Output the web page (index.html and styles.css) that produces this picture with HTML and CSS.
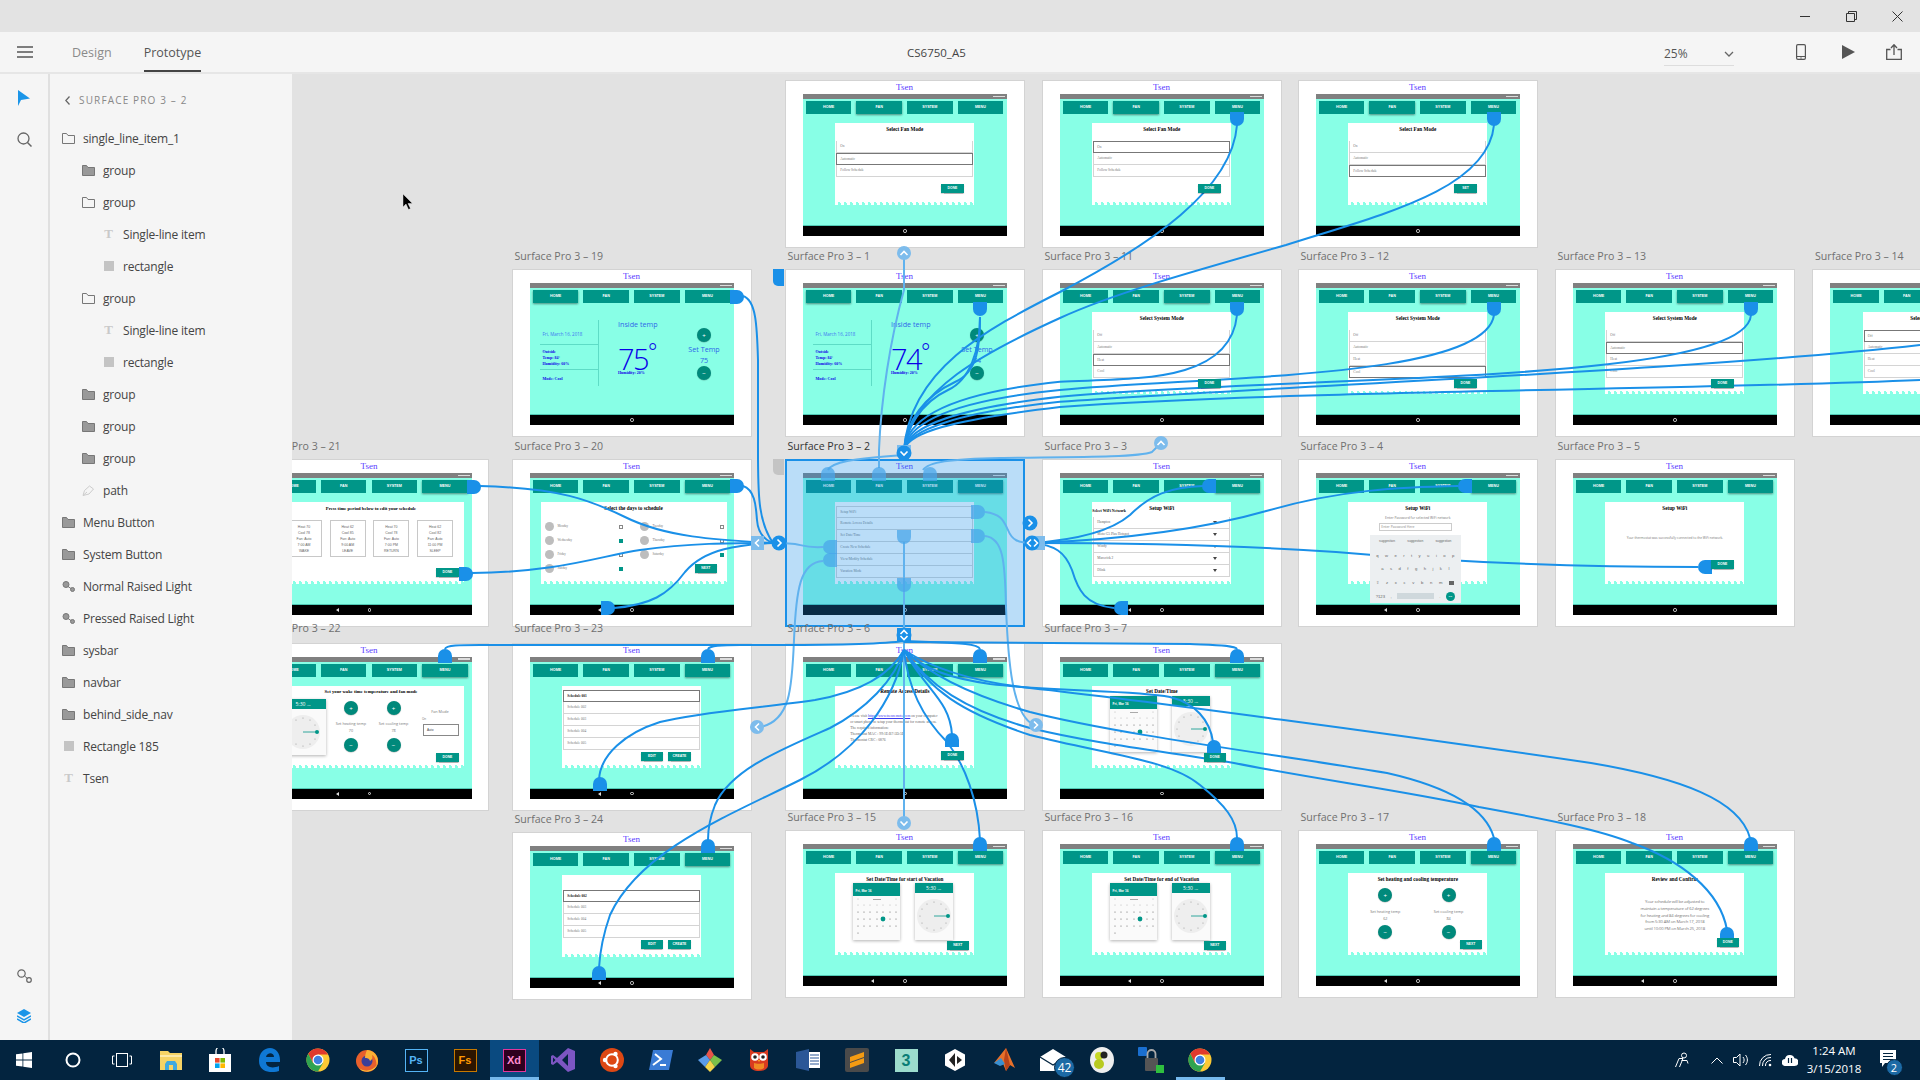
FILE: index.html
```html
<!DOCTYPE html>
<html lang="en">
<head>
<meta charset="utf-8">
<title>CS6750_A5 - Adobe XD</title>
<link rel="stylesheet" href="styles.css">
</head>
<body>
<svg class="defs" aria-hidden="true">
  <defs>
    <symbol id="fo" viewBox="0 0 13 11"><path d="M.5 10.5V.5h4l1.5 2h6.5v8z" fill="none" stroke="#777"/></symbol>
    <symbol id="ff" viewBox="0 0 13 11"><path d="M.5 10.5V.5h4l1.5 2h6.5v8z" fill="#999" stroke="#777"/></symbol>
    <symbol id="cp" viewBox="0 0 13 11"><circle cx="4" cy="3.5" r="3" fill="#999" stroke="#777"/><circle cx="10.5" cy="8.5" r="2" fill="#999" stroke="#777"/><path d="M6 5.5l3 2" stroke="#777"/></symbol>
    <symbol id="pen" viewBox="0 0 13 11"><path d="M1 10.5l1.5-5 5-4.5 4 3-4.5 5z" fill="none" stroke="#ccc"/><path d="M1 10.5l4-3.5" stroke="#ccc"/></symbol>
    <symbol id="bt" viewBox="0 0 14 14"><path d="M0 14V7a7 7 0 0 1 14 0v7z"/></symbol>
    <symbol id="bb" viewBox="0 0 14 14"><path d="M0 0v7a7 7 0 0 0 14 0V0z"/></symbol>
    <symbol id="bl" viewBox="0 0 14 14"><path d="M14 0H7a7 7 0 0 0 0 14h7z"/></symbol>
    <symbol id="br" viewBox="0 0 14 14"><path d="M0 0h7a7 7 0 0 1 0 14H0z"/></symbol>
    <symbol id="clock" viewBox="0 0 38 38">
      <circle cx="19" cy="19" r="17" fill="#eee"/>
      <g fill="#999"><circle cx="19" cy="5" r=".6"/><circle cx="26" cy="7" r=".6"/><circle cx="31" cy="12" r=".6"/><circle cx="26" cy="31" r=".6"/><circle cx="31" cy="26" r=".6"/><circle cx="19" cy="33" r=".6"/><circle cx="12" cy="31" r=".6"/><circle cx="7" cy="26" r=".6"/><circle cx="5" cy="19" r=".6"/><circle cx="7" cy="12" r=".6"/><circle cx="12" cy="7" r=".6"/></g>
      <path d="M19 19h13" stroke="#009688" stroke-width=".8"/><circle cx="33" cy="19" r="2" fill="#009688"/>
    </symbol>
    <symbol id="cal" viewBox="0 0 48 44">
      <g fill="#aaa"><path d="M20 3h8v1h-8z"/><circle cx="5" cy="3" r=".5"/><circle cx="43" cy="3" r=".5"/><circle cx="5" cy="9" r=".5"/><circle cx="11" cy="9" r=".5"/><circle cx="17" cy="9" r=".5"/><circle cx="24" cy="9" r=".5"/><circle cx="30" cy="9" r=".5"/><circle cx="37" cy="9" r=".5"/><circle cx="43" cy="9" r=".5"/></g>
      <g fill="#666"><circle cx="5" cy="16" r=".6"/><circle cx="11" cy="16" r=".6"/><circle cx="17" cy="16" r=".6"/><circle cx="24" cy="16" r=".6"/><circle cx="30" cy="16" r=".6"/><circle cx="37" cy="16" r=".6"/><circle cx="43" cy="16" r=".6"/><circle cx="5" cy="23" r=".6"/><circle cx="11" cy="23" r=".6"/><circle cx="17" cy="23" r=".6"/><circle cx="24" cy="23" r=".6"/><circle cx="37" cy="23" r=".6"/><circle cx="43" cy="23" r=".6"/><circle cx="5" cy="30" r=".6"/><circle cx="11" cy="30" r=".6"/><circle cx="17" cy="30" r=".6"/><circle cx="24" cy="30" r=".6"/><circle cx="30" cy="30" r=".6"/><circle cx="37" cy="30" r=".6"/><circle cx="43" cy="30" r=".6"/><circle cx="5" cy="37" r=".6"/></g>
      <circle cx="30" cy="23" r="2.4" fill="#009688"/>
    </symbol>
    <symbol id="chrome" viewBox="0 0 24 24"><circle cx="12" cy="12" r="11.5" fill="#fcc934"/><path d="M12 .5A11.500 11.500 0 0 1 22 6.500L12 6.500 7 15 2.300 5.800A11.500 11.500 0 0 1 12 .5z" fill="#e0392d"/><path d="M2.300 5.800A11.500 11.500 0 0 0 12 23.500L17 15 7 15z" fill="#2fa350"/><circle cx="12" cy="12" r="5.500" fill="#fff"/><circle cx="12" cy="12" r="4.300" fill="#3f7fe0"/></symbol>
  </defs>
</svg>

<header class="titlebar">
  <span class="win"><svg width="11" height="11" viewBox="0 0 11 11"><path d="M0 5.500h10" stroke="#333"/></svg></span>
  <span class="win"><svg width="11" height="11" viewBox="0 0 11 11"><path d="M.5 2.500h8v8h-8zM2.500 2.500v-2h8v8h-2" fill="none" stroke="#333"/></svg></span>
  <span class="win"><svg width="11" height="11" viewBox="0 0 11 11"><path d="M.5.500l10 10M10.500.500l-10 10" stroke="#333"/></svg></span>
</header>

<div class="toolbar">
  <div class="tleft">
    <svg class="burger" width="16" height="12" viewBox="0 0 16 12"><path d="M0 1h16M0 6h16M0 11h16" stroke="#555" stroke-width="1.500"/></svg>
    <span class="tab">Design</span>
    <span class="tab act-tab">Prototype</span>
  </div>
  <span class="doc">CS6750_A5</span>
  <div class="tright">
    <span class="zoom"><span>25%</span><svg width="10" height="6" viewBox="0 0 10 6"><path d="M1 1l4 4 4-4" fill="none" stroke="#666" stroke-width="1.300"/></svg></span>
    <svg class="ti dev" width="10" height="16" viewBox="0 0 10 16"><rect x=".6" y=".6" width="8.800" height="14.800" rx="1.300" fill="none" stroke="#555" stroke-width="1.200"/><path d="M1 12.500h8" stroke="#555"/><circle cx="5" cy="14" r=".7" fill="#555"/></svg>
    <svg class="ti play" width="13" height="14" viewBox="0 0 13 14"><path d="M0 0l13 7-13 7z" fill="#555"/></svg>
    <svg class="ti share" width="16" height="16" viewBox="0 0 16 16"><path d="M4.500 5.500H.7v9.800h14.600V5.500h-3.800" fill="none" stroke="#555" stroke-width="1.300"/><path d="M8 11V1M5 4l3-3.300L11 4" fill="none" stroke="#555" stroke-width="1.300"/></svg>
  </div>
</div>

<main class="main">
  <aside class="rail">
    <div class="railgrp">
      <svg width="12" height="16" viewBox="0 0 12 16"><path d="M0 0l12 8.500-9 1.500-3 6z" fill="#1b95e8"/></svg>
      <svg width="15" height="15" viewBox="0 0 15 15"><circle cx="6.500" cy="6.500" r="5.500" fill="none" stroke="#666" stroke-width="1.300"/><path d="M10.500 10.500l4 4" stroke="#666" stroke-width="1.500"/></svg>
    </div>
    <div class="railgrp">
      <svg width="15" height="14" viewBox="0 0 15 14"><circle cx="4.500" cy="4.500" r="3.700" fill="none" stroke="#666" stroke-width="1.200"/><circle cx="12" cy="11" r="2.300" fill="none" stroke="#666" stroke-width="1.200"/><path d="M7.500 7l3 2.500" stroke="#666"/></svg>
      <svg width="14" height="14" viewBox="0 0 14 14"><path d="M7 0l7 4-7 4-7-4z" fill="#1b95e8"/><path d="M0 7l7 4 7-4M0 10l7 4 7-4" fill="none" stroke="#1b95e8" stroke-width="1.500"/></svg>
    </div>
  </aside>
  <aside class="panel">
    <div class="phead"><svg width="5" height="9" viewBox="0 0 5 9"><path d="M4.500.5L.8 4.500l3.700 4" fill="none" stroke="#666" stroke-width="1.300"/></svg><span>SURFACE PRO 3 – 2</span></div>
    <div class="row"><svg class="ic"><use href="#fo"/></svg><span>single_line_item_1</span></div>
    <div class="row l1"><svg class="ic"><use href="#ff"/></svg><span>group</span></div>
    <div class="row l1"><svg class="ic"><use href="#fo"/></svg><span>group</span></div>
    <div class="row l2"><span class="tg">T</span><span>Single-line item</span></div>
    <div class="row l2"><span class="rg"></span><span>rectangle</span></div>
    <div class="row l1"><svg class="ic"><use href="#fo"/></svg><span>group</span></div>
    <div class="row l2"><span class="tg">T</span><span>Single-line item</span></div>
    <div class="row l2"><span class="rg"></span><span>rectangle</span></div>
    <div class="row l1"><svg class="ic"><use href="#ff"/></svg><span>group</span></div>
    <div class="row l1"><svg class="ic"><use href="#ff"/></svg><span>group</span></div>
    <div class="row l1"><svg class="ic"><use href="#ff"/></svg><span>group</span></div>
    <div class="row l1"><svg class="ic"><use href="#pen"/></svg><span>path</span></div>
    <div class="row"><svg class="ic"><use href="#ff"/></svg><span>Menu Button</span></div>
    <div class="row"><svg class="ic"><use href="#ff"/></svg><span>System Button</span></div>
    <div class="row"><svg class="ic"><use href="#cp"/></svg><span>Normal Raised Light</span></div>
    <div class="row"><svg class="ic"><use href="#cp"/></svg><span>Pressed Raised Light</span></div>
    <div class="row"><svg class="ic"><use href="#ff"/></svg><span>sysbar</span></div>
    <div class="row"><svg class="ic"><use href="#ff"/></svg><span>navbar</span></div>
    <div class="row"><svg class="ic"><use href="#ff"/></svg><span>behind_side_nav</span></div>
    <div class="row"><span class="rg"></span><span>Rectangle 185</span></div>
    <div class="row"><span class="tg">T</span><span>Tsen</span></div>
  </aside>

  <section class="canvas">

    <!-- column 0 -->
    <article class="ab c0 r2"><span class="lb">Surface Pro 3 – 21</span><div class="ts">Tsen</div><div class="sc"><div class="st"></div><div class="bd"><div class="nv"><b>HOME</b><b>FAN</b><b>SYSTEM</b><b class="on">MENU</b></div>
      <div class="card w"><div class="ct t8">Press time period below to edit your schedule</div>
        <div class="periods">
          <div class="per">Heat 70<br>Cool 78<br>Fan: Auto<br>7:00 AM<br>WAKE</div>
          <div class="per">Heat 62<br>Cool 85<br>Fan: Auto<br>9:00 AM<br>LEAVE</div>
          <div class="per">Heat 70<br>Cool 78<br>Fan: Auto<br>7:00 PM<br>RETURN</div>
          <div class="per">Heat 62<br>Cool 82<br>Fan: Auto<br>11:00 PM<br>SLEEP</div>
        </div>
        <div class="act pr5 m11"><span class="b">DONE</span></div>
      </div></div><div class="nb"><i class="bk"></i><i class="hm"></i></div></div></article>

    <article class="ab c0 r3"><span class="lb">Surface Pro 3 – 22</span><div class="ts">Tsen</div><div class="sc"><div class="st"></div><div class="bd"><div class="nv"><b>HOME</b><b>FAN</b><b>SYSTEM</b><b class="on">MENU</b></div>
      <div class="card w"><div class="ct t15">Set your wake time temperature and fan mode</div>
        <div class="wake">
          <div class="tw ws"><div class="twh">5:30 <small>AM</small></div><svg class="face"><use href="#clock"/></svg></div>
          <div class="tc n"><div class="cb">+</div><div class="tl">Set heating temp</div><div class="tl">70</div><div class="cb mm">−</div></div>
          <div class="tc n"><div class="cb">+</div><div class="tl">Set cooling temp</div><div class="tl">78</div><div class="cb mm">−</div></div>
          <div class="fan"><div class="fm">Fan Mode</div><div class="fo">On</div><div class="fb">Auto</div></div>
        </div>
        <div class="act pr5"><span class="b">DONE</span></div>
      </div></div><div class="nb"><i class="bk"></i><i class="hm"></i></div></div></article>

    <!-- column 1 -->
    <article class="ab c1 r1"><span class="lb">Surface Pro 3 – 19</span><div class="ts">Tsen</div><div class="sc"><div class="st"></div><div class="bd"><div class="nv"><b class="on">HOME</b><b>FAN</b><b>SYSTEM</b><b>MENU</b></div>
      <div class="home">
        <div class="hl"><div class="hd">Fri, March 16, 2018</div><div class="ho">Outside<br>Temp: 84°<br>Humidity: 60%</div><div class="hx">Mode: Cool</div></div>
        <div class="hc"><div class="it">Inside temp</div><div class="tm">75<span class="dg">°</span></div><div class="hh">Humidity: 20%</div></div>
        <div class="hr"><div class="cb">+</div><div class="sl">Set Temp</div><div class="sv">75</div><div class="cb">−</div></div>
      </div></div><div class="nb"><i class="hm"></i></div></div></article>

    <article class="ab c1 r2"><span class="lb">Surface Pro 3 – 20</span><div class="ts">Tsen</div><div class="sc"><div class="st"></div><div class="bd"><div class="nv"><b>HOME</b><b>FAN</b><b>SYSTEM</b><b class="on">MENU</b></div>
      <div class="card w"><div class="ct t17">Select the days to schedule</div>
        <div class="days">
          <div class="dy"><i class="rd"></i><span>Monday</span><i class="ck"></i></div><div class="dy"><i class="rd"></i><span>Tuesday</span><i class="ck"></i></div>
          <div class="dy"><i class="rd"></i><span>Wednesday</span><i class="ck yes"></i></div><div class="dy"><i class="rd"></i><span>Thursday</span><i class="ck"></i></div>
          <div class="dy"><i class="rd"></i><span>Friday</span><i class="ck"></i></div><div class="dy"><i class="rd"></i><span>Saturday</span><i class="ck yes"></i></div>
          <div class="dy"><i class="rd"></i><span>Sunday</span><i class="ck yes"></i></div><div class="dy nx"><span class="b">NEXT</span></div>
        </div>
      </div></div><div class="nb"><i class="bk"></i><i class="hm"></i></div></div></article>

    <article class="ab c1 r3"><span class="lb">Surface Pro 3 – 23</span><div class="ts">Tsen</div><div class="sc"><div class="st"></div><div class="bd"><div class="nv"><b>HOME</b><b>FAN</b><b>SYSTEM</b><b class="on">MENU</b></div>
      <div class="card pt4"><div class="li sel strong">Schedule 001</div><div class="li">Schedule 002</div><div class="li">Schedule 003</div><div class="li">Schedule 004</div><div class="li">Schedule 005</div>
        <div class="act m2"><span class="b">EDIT</span><span class="b">CREATE</span></div>
      </div></div><div class="nb"><i class="bk"></i><i class="hm"></i></div></div></article>

    <article class="ab c1 r4b"><span class="lb">Surface Pro 3 – 24</span><div class="ts">Tsen</div><div class="sc"><div class="st"></div><div class="bd"><div class="nv"><b>HOME</b><b>FAN</b><b>SYSTEM</b><b class="on">MENU</b></div>
      <div class="card pt15"><div class="li sel strong">Schedule 002</div><div class="li">Schedule 003</div><div class="li">Schedule 004</div><div class="li">Schedule 005</div>
        <div class="act m2"><span class="b">EDIT</span><span class="b">CREATE</span></div>
      </div></div><div class="nb"><i class="bk"></i><i class="hm"></i></div></div></article>

    <!-- column 2 -->
    <article class="ab c2 r0"><div class="ts">Tsen</div><div class="sc"><div class="st"></div><div class="bd"><div class="nv"><b>HOME</b><b class="on">FAN</b><b>SYSTEM</b><b>MENU</b></div>
      <div class="card"><div class="ct t17">Select Fan Mode</div><div class="li">On</div><div class="li sel">Automatic</div><div class="li">Follow Schedule</div>
        <div class="act m7"><span class="b">DONE</span></div></div></div><div class="nb"><i class="hm"></i></div></div></article>

    <article class="ab c2 r1"><span class="lb">Surface Pro 3 – 1</span><div class="ts">Tsen</div><div class="sc"><div class="st"></div><div class="bd"><div class="nv"><b class="on">HOME</b><b>FAN</b><b>SYSTEM</b><b>MENU</b></div>
      <div class="home">
        <div class="hl"><div class="hd">Fri, March 16, 2018</div><div class="ho">Outside<br>Temp: 84°<br>Humidity: 60%</div><div class="hx">Mode: Cool</div></div>
        <div class="hc"><div class="it">Inside temp</div><div class="tm">74<span class="dg">°</span></div><div class="hh">Humidity: 20%</div></div>
        <div class="hr"><div class="cb">+</div><div class="sl">Set Temp</div><div class="sv">74</div><div class="cb">−</div></div>
      </div></div><div class="nb"><i class="hm"></i></div></div></article>

    <article class="ab c2 r2 selected"><span class="lb dark">Surface Pro 3 – 2</span><div class="ts">Tsen</div><div class="sc"><div class="st"></div><div class="bd"><div class="nv"><b>HOME</b><b>FAN</b><b>SYSTEM</b><b class="on">MENU</b></div>
      <div class="card pt4"><div class="li">Setup WiFi</div><div class="li">Remote Access Details</div><div class="li">Set Date/Time</div><div class="li">Create New Schedule</div><div class="li">View/Modify Schedule</div><div class="li">Vacation Mode</div></div></div><div class="nb"><i class="hm"></i></div></div></article>

    <article class="ab c2 r3"><span class="lb">Surface Pro 3 – 6</span><div class="ts">Tsen</div><div class="sc"><div class="st"></div><div class="bd"><div class="nv"><b>HOME</b><b>FAN</b><b>SYSTEM</b><b class="on">MENU</b></div>
      <div class="card"><div class="ct t25">Remote Access Details</div>
        <div class="para">Please visit <a class="lk">https://www.tsenremote.com</a> on your computer<br>or smart phone to setup your thermostat for remote access.<br>The required information:<br>Thermostat MAC : 99:1E:B7:5D:5B<br>Thermostat CRC : 0876</div>
        <div class="act m7"><span class="b">DONE</span></div></div></div><div class="nb"><i class="hm"></i></div></div></article>

    <article class="ab c2 r4"><span class="lb">Surface Pro 3 – 15</span><div class="ts">Tsen</div><div class="sc"><div class="st"></div><div class="bd"><div class="nv"><b>HOME</b><b>FAN</b><b>SYSTEM</b><b class="on">MENU</b></div>
      <div class="card"><div class="ct t10">Set Date/Time for start of Vacation</div>
        <div class="dt"><div class="dw"><div class="dwh">Fri, Mar 16</div><svg class="calg"><use href="#cal"/></svg></div><div class="tw"><div class="twh">5:30 <small>AM</small></div><svg class="face"><use href="#clock"/></svg></div></div>
        <div class="act pr5 m1"><span class="b">NEXT</span></div></div></div><div class="nb"><i class="bk"></i><i class="hm"></i></div></div></article>

    <!-- column 3 -->
    <article class="ab c3 r0"><div class="ts">Tsen</div><div class="sc"><div class="st"></div><div class="bd"><div class="nv"><b>HOME</b><b class="on">FAN</b><b>SYSTEM</b><b>MENU</b></div>
      <div class="card"><div class="ct t17">Select Fan Mode</div><div class="li sel">On</div><div class="li">Automatic</div><div class="li">Follow Schedule</div>
        <div class="act m7"><span class="b">DONE</span></div></div></div><div class="nb"><i class="hm"></i></div></div></article>

    <article class="ab c3 r1"><span class="lb">Surface Pro 3 – 11</span><div class="ts">Tsen</div><div class="sc"><div class="st"></div><div class="bd"><div class="nv"><b>HOME</b><b>FAN</b><b class="on">SYSTEM</b><b>MENU</b></div>
      <div class="card"><div class="ct t17">Select System Mode</div><div class="li">Off</div><div class="li">Automatic</div><div class="li sel">Heat</div><div class="li">Cool</div>
        <div class="act m1"><span class="b">DONE</span></div></div></div><div class="nb"><i class="hm"></i></div></div></article>

    <article class="ab c3 r2"><span class="lb">Surface Pro 3 – 3</span><div class="ts">Tsen</div><div class="sc"><div class="st"></div><div class="bd"><div class="nv"><b>HOME</b><b>FAN</b><b>SYSTEM</b><b class="on">MENU</b></div>
      <div class="card"><div class="ct t15 wifi-t">Setup WiFi<span class="swn">Select WiFi Network</span></div>
        <div class="li sg">Hampton<i class="wf"></i></div><div class="li sg">Moto G5 Plus Hotspot<i class="wf"></i></div><div class="li sg">Windy<i class="wf"></i></div><div class="li sg">Maverick 2<i class="wf"></i></div><div class="li sg">Dlink<i class="wf"></i></div></div></div><div class="nb"><i class="bk"></i><i class="hm"></i></div></div></article>

    <article class="ab c3 r3"><span class="lb">Surface Pro 3 – 7</span><div class="ts">Tsen</div><div class="sc"><div class="st"></div><div class="bd"><div class="nv"><b>HOME</b><b>FAN</b><b>SYSTEM</b><b class="on">MENU</b></div>
      <div class="card"><div class="ct t10">Set Date/Time</div>
        <div class="dt"><div class="dw"><div class="dwh">Fri, Mar 16</div><svg class="calg"><use href="#cal"/></svg></div><div class="tw"><div class="twh">5:30 <small>AM</small></div><svg class="face"><use href="#clock"/></svg></div></div>
        <div class="act pr5 m1"><span class="b">DONE</span></div></div></div><div class="nb"><i class="hm"></i></div></div></article>

    <article class="ab c3 r4"><span class="lb">Surface Pro 3 – 16</span><div class="ts">Tsen</div><div class="sc"><div class="st"></div><div class="bd"><div class="nv"><b>HOME</b><b>FAN</b><b>SYSTEM</b><b class="on">MENU</b></div>
      <div class="card"><div class="ct t10">Set Date/Time for end of Vacation</div>
        <div class="dt"><div class="dw"><div class="dwh">Fri, Mar 16</div><svg class="calg"><use href="#cal"/></svg></div><div class="tw"><div class="twh">5:30 <small>AM</small></div><svg class="face"><use href="#clock"/></svg></div></div>
        <div class="act pr5 m1"><span class="b">NEXT</span></div></div></div><div class="nb"><i class="bk"></i><i class="hm"></i></div></div></article>

    <!-- column 4 -->
    <article class="ab c4 r0"><div class="ts">Tsen</div><div class="sc"><div class="st"></div><div class="bd"><div class="nv"><b>HOME</b><b class="on">FAN</b><b>SYSTEM</b><b>MENU</b></div>
      <div class="card"><div class="ct t17">Select Fan Mode</div><div class="li">On</div><div class="li">Automatic</div><div class="li sel">Follow Schedule</div>
        <div class="act m7"><span class="b">SET</span></div></div></div><div class="nb"><i class="hm"></i></div></div></article>

    <article class="ab c4 r1"><span class="lb">Surface Pro 3 – 12</span><div class="ts">Tsen</div><div class="sc"><div class="st"></div><div class="bd"><div class="nv"><b>HOME</b><b>FAN</b><b class="on">SYSTEM</b><b>MENU</b></div>
      <div class="card"><div class="ct t17">Select System Mode</div><div class="li">Off</div><div class="li">Automatic</div><div class="li">Heat</div><div class="li sel">Cool</div>
        <div class="act m1"><span class="b">DONE</span></div></div></div><div class="nb"><i class="hm"></i></div></div></article>

    <article class="ab c4 r2"><span class="lb">Surface Pro 3 – 4</span><div class="ts">Tsen</div><div class="sc"><div class="st"></div><div class="bd"><div class="nv"><b>HOME</b><b>FAN</b><b>SYSTEM</b><b class="on">MENU</b></div>
      <div class="card"><div class="ct t12">Setup WiFi</div><div class="pw">Enter Password for selected WiFi network</div><div class="pi">Enter Password Here</div>
        <div class="kb">
          <div class="kr sg-r"><span>suggestion</span><span>suggestion</span><span>suggestion</span></div>
          <div class="kr"><span>q</span><span>w</span><span>e</span><span>r</span><span>t</span><span>y</span><span>u</span><span>i</span><span>o</span><span>p</span></div>
          <div class="kr pad"><span>a</span><span>s</span><span>d</span><span>f</span><span>g</span><span>h</span><span>j</span><span>k</span><span>l</span></div>
          <div class="kr"><span>⇧</span><span>z</span><span>x</span><span>c</span><span>v</span><span>b</span><span>n</span><span>m</span><span class="bs"></span></div>
          <div class="kr"><span>?123</span><span>,</span><span class="sp"></span><span>.</span><span class="go">GO</span></div>
        </div></div></div><div class="nb"><i class="bk"></i><i class="hm"></i></div></div></article>

    <article class="ab c4 r4"><span class="lb">Surface Pro 3 – 17</span><div class="ts">Tsen</div><div class="sc"><div class="st"></div><div class="bd"><div class="nv"><b>HOME</b><b>FAN</b><b>SYSTEM</b><b class="on">MENU</b></div>
      <div class="card"><div class="ct t15">Set heating and cooling temperature</div>
        <div class="temps"><div class="tc"><div class="cb">+</div><div class="tl">Set heating temp</div><div class="tl">62</div><div class="cb mm">−</div></div><div class="tc"><div class="cb">+</div><div class="tl">Set cooling temp</div><div class="tl">84</div><div class="cb mm">−</div></div></div>
        <div class="act pr5"><span class="b">NEXT</span></div></div></div><div class="nb"><i class="bk"></i><i class="hm"></i></div></div></article>

    <!-- column 5 -->
    <article class="ab c5 r1"><span class="lb">Surface Pro 3 – 13</span><div class="ts">Tsen</div><div class="sc"><div class="st"></div><div class="bd"><div class="nv"><b>HOME</b><b>FAN</b><b class="on">SYSTEM</b><b>MENU</b></div>
      <div class="card"><div class="ct t17">Select System Mode</div><div class="li">Off</div><div class="li sel">Automatic</div><div class="li">Heat</div><div class="li">Cool</div>
        <div class="act m1"><span class="b">DONE</span></div></div></div><div class="nb"><i class="hm"></i></div></div></article>

    <article class="ab c5 r2"><span class="lb">Surface Pro 3 – 5</span><div class="ts">Tsen</div><div class="sc"><div class="st"></div><div class="bd"><div class="nv"><b>HOME</b><b>FAN</b><b>SYSTEM</b><b class="on">MENU</b></div>
      <div class="card"><div class="ct t33">Setup WiFi</div><div class="ok">Your thermostat was successfully connected to the WiFi network.</div>
        <div class="act m19"><span class="b">DONE</span></div></div></div><div class="nb"><i class="hm"></i></div></div></article>

    <article class="ab c5 r4"><span class="lb">Surface Pro 3 – 18</span><div class="ts">Tsen</div><div class="sc"><div class="st"></div><div class="bd"><div class="nv"><b>HOME</b><b>FAN</b><b>SYSTEM</b><b class="on">MENU</b></div>
      <div class="card"><div class="ct t25">Review and Confirm</div>
        <div class="rev">Your schedule will be adjusted to<br>maintain a temperature of 62 degrees<br>for heating and 84 degrees for cooling<br>from 5:30 AM on March 17, 2018<br>until 10:00 PM on March 25, 2018</div>
        <div class="act pr5"><span class="b">DONE</span></div></div></div><div class="nb"><i class="bk"></i><i class="hm"></i></div></div></article>

    <!-- column 6 -->
    <article class="ab c6 r1"><span class="lb">Surface Pro 3 – 14</span><div class="ts">Tsen</div><div class="sc"><div class="st"></div><div class="bd"><div class="nv"><b>HOME</b><b>FAN</b><b class="on">SYSTEM</b><b>MENU</b></div>
      <div class="card"><div class="ct t17">Select System Mode</div><div class="li sel">Off</div><div class="li">Automatic</div><div class="li">Heat</div><div class="li">Cool</div>
        <div class="act m1"><span class="b">DONE</span></div></div></div><div class="nb"><i class="hm"></i></div></div></article>

    <!-- prototype wires -->
    <svg class="wires" width="1628" height="966" viewBox="292 74 1628 966">
      <!-- grey and blue tabs behind board edges -->
      <path d="M773 269h11v17h-6a5 5 0 0 1-5-5z" fill="#1a90e8"/>
      <path d="M773 459h11v16h-6a5 5 0 0 1-5-5z" fill="#c4c4c4"/>

      <!-- wires of the selected board, faded -->
      <g class="fade" fill="none">
        <path d="M828 470C832 462 850 459 904 455"/>
        <path d="M879 468L879 450C881 400 890 340 904 290L904 258"/>
        <path d="M923 470C928 462 950 459 1000 458C1060 457 1137 458 1152 452L1161 443"/>
        <path d="M985 512C1002 514 1004 522 1008 530C1012 540 1018 543 1032 543"/>
        <path d="M985 536C1003 538 1005 560 1006 607C1008 660 1012 715 1034 725"/>
        <path d="M823 547C806 548 802 545 795 544L782 543"/>
        <path d="M823 561C800 562 796 590 794 640C792 690 790 720 761 727"/>
        <path d="M904 542L904 820"/>
      </g>
      <g class="fadefill">
        <use href="#bt" x="821" y="467" width="14" height="14"/>
        <use href="#bt" x="872" y="467" width="14" height="14"/>
        <use href="#bt" x="923" y="467" width="14" height="14"/>
        <use href="#br" x="971" y="505" width="14" height="14"/>
        <use href="#br" x="971" y="529" width="14" height="14"/>
        <use href="#bl" x="823" y="540" width="14" height="14"/>
        <use href="#bl" x="823" y="553" width="14" height="14"/>
        <use href="#bb" x="897" y="530" width="14" height="14"/>
        <use href="#bb" x="897" y="578" width="14" height="14"/>
      </g>

      <!-- solid wires -->
      <g class="wire" fill="none">
        <!-- left hub -->
        <path d="M743 296C756 300 757 325 758 360L758 440C758 490 757 520 773 543"/>
        <path d="M743 486C756 490 756 510 757 520C758 533 765 540 773 543"/>
        <path d="M614 608C650 605 668 595 685 572C705 548 740 545 773 543"/>
        <path d="M480 486C560 488 590 500 625 517C665 537 715 540 773 543"/>
        <path d="M472 573C560 572 600 556 640 550C690 543 730 543 773 543"/>
        <!-- right hub -->
        <path d="M1203 486C1170 487 1150 495 1130 515C1110 532 1075 540 1032 543"/>
        <path d="M1458 486C1400 487 1340 490 1270 510C1200 530 1120 540 1032 543"/>
        <path d="M1698 567C1560 567 1450 562 1336 552C1230 545 1130 543 1032 543"/>
        <path d="M1114 608C1085 605 1078 590 1072 570C1065 552 1055 545 1032 543"/>
        <!-- top hub -->
        <path d="M980 317C980 345 978 372 955 382C925 396 906 420 904 450"/>
        <path d="M980 317C980 350 970 380 948 390C920 403 906 430 904 450"/>
        <path d="M1237 125C1232 190 1150 245 1060 292C985 330 910 370 904 450"/>
        <path d="M1494 125C1488 190 1380 215 1286 245C1180 275 1110 295 1060 318C985 352 912 390 904 450"/>
        <path d="M904 450C907 415 960 392 1060 381.700C1130 378 1230 385 1237 315"/>
        <path d="M904 450C908 420 960 400 1060 390C1200 376 1485 380 1494 315"/>
        <path d="M904 450C908 425 960 408 1060 396.700C1300 375 1745 385 1751 315"/>
        <path d="M904 450C908 430 960 412 1060 401.700C1300 385 1700 370 1920 345"/>
        <path d="M904 450C908 433 950 420 1060 407C1300 390 1700 390 1920 380"/>
        <!-- bottom hub -->
        <path d="M445 649C446 645 460 645 480 645L780 645C850 645 890 643 904 641"/>
        <path d="M708 649C710 645 725 645 740 645"/>
        <path d="M980 649C978 644 960 643 930 642L904 641"/>
        <path d="M1237 649C1235 645 1215 645 1190 644L904 642"/>
        <path d="M904 650C890 675 860 692 815 700C760 708 700 712 660 722C625 733 600 755 599 780"/>
        <path d="M904 650C895 680 865 710 830 728C780 750 730 770 715 805C709 820 708 830 708 840"/>
        <path d="M904 650C895 700 860 750 800 780C730 815 640 850 610 915C603 935 600 950 599 968"/>
        <path d="M904 650C925 690 950 700 952 735"/>
        <path d="M904 650C908 690 925 720 947 742C965 765 978 800 980 840"/>
        <path d="M904 650C925 670 950 678 990 684C1060 692 1130 690 1170 697C1195 703 1210 720 1213 742"/>
        <path d="M904 650C930 690 960 712 1030 735C1110 755 1170 760 1200 785C1225 805 1237 820 1237 838"/>
        <path d="M904 650C930 675 970 695 1030 712C1120 735 1280 755 1387 773C1440 785 1485 805 1494 838"/>
        <path d="M904 650C935 670 975 682 1030 688C1140 700 1400 735 1591 763C1680 778 1740 800 1750 838"/>
        <path d="M904 650C928 685 965 710 1030 728C1100 745 1170 752 1234 763C1320 780 1400 790 1479 807C1550 820 1600 830 1632 843C1680 860 1720 890 1727 930"/>
      </g>
      <g class="wirefill">
        <!-- domes pointing up -->
        <use href="#bt" x="438" y="649" width="14" height="14"/>
        <use href="#bt" x="701" y="649" width="14" height="14"/>
        <use href="#bt" x="973" y="649" width="14" height="14"/>
        <use href="#bt" x="1230" y="649" width="14" height="14"/>
        <use href="#bt" x="945" y="733" width="14" height="14"/>
        <use href="#bt" x="1207" y="740" width="14" height="14"/>
        <use href="#bt" x="593" y="777" width="14" height="14"/>
        <use href="#bt" x="592" y="966" width="14" height="14"/>
        <use href="#bt" x="701" y="839" width="14" height="14"/>
        <use href="#bt" x="973" y="837" width="14" height="14"/>
        <use href="#bt" x="1230" y="837" width="14" height="14"/>
        <use href="#bt" x="1487" y="837" width="14" height="14"/>
        <use href="#bt" x="1744" y="837" width="14" height="14"/>
        <use href="#bt" x="1720" y="927" width="14" height="14"/>
        <!-- domes pointing down -->
        <use href="#bb" x="973" y="302" width="14" height="14"/>
        <use href="#bb" x="1230" y="112" width="14" height="14"/>
        <use href="#bb" x="1487" y="112" width="14" height="14"/>
        <use href="#bb" x="1230" y="302" width="14" height="14"/>
        <use href="#bb" x="1487" y="302" width="14" height="14"/>
        <use href="#bb" x="1744" y="302" width="14" height="14"/>
        <!-- domes pointing right -->
        <use href="#br" x="730" y="290" width="14" height="14"/>
        <use href="#br" x="730" y="479" width="14" height="14"/>
        <use href="#br" x="467" y="480" width="14" height="14"/>
        <use href="#br" x="459" y="567" width="14" height="14"/>
        <use href="#br" x="601" y="601" width="14" height="14"/>
        <!-- domes pointing left -->
        <use href="#bl" x="1202" y="479" width="14" height="14"/>
        <use href="#bl" x="1458" y="479" width="14" height="14"/>
        <use href="#bl" x="1698" y="560" width="14" height="14"/>
        <use href="#bl" x="1114" y="601" width="14" height="14"/>
      </g>

      <!-- connection ports -->
      <g>
        <circle class="pl" cx="904" cy="253" r="7"/><path class="cv" d="M900.500 255l3.500-3.500 3.500 3.500"/>
        <rect class="pl" x="897" y="445" width="14" height="8"/>
        <rect class="pl" x="751" y="536" width="13" height="14"/><path class="cv" d="M759 539.500l-3.500 3.500 3.500 3.500"/>
        <circle class="pl" cx="757" cy="727" r="7"/><path class="cv" d="M759 723.500l-3.500 3.500 3.500 3.500"/>
        <circle class="pl" cx="1036" cy="725" r="7"/><path class="cv" d="M1034 721.500l3.500 3.500-3.500 3.500"/>
        <circle class="pl" cx="904" cy="823" r="7"/><path class="cv" d="M900.500 821.500l3.500 3.500 3.500-3.500"/>
        <circle class="pl" cx="1161" cy="443" r="7"/><path class="cv" d="M1157.500 445l3.500-3.500 3.500 3.500"/>
        <rect class="pl" x="1032" y="536" width="13" height="14"/>
        <rect class="pd" x="897" y="628" width="14" height="13"/>
        <circle class="pd" cx="904" cy="453" r="7.500"/><path class="cv" d="M900.500 451.500l3.500 3.500 3.500-3.500"/>
        <circle class="pd" cx="779" cy="543" r="7.500"/><path class="cv" d="M777.500 539.500l3.500 3.500-3.500 3.500"/>
        <circle class="pd" cx="1030" cy="523" r="7.500"/><path class="cv" d="M1028.500 519.500l3.500 3.500-3.500 3.500"/>
        <circle class="pd" cx="1032" cy="543" r="7.500"/><path class="cv" d="M1031 539.500l-3.500 3.500 3.500 3.500M1034 539.500l3.500 3.500-3.500 3.500"/>
        <circle class="pd" cx="904" cy="635" r="7.500"/><path class="cv" d="M900.500 634l3.500-3.500 3.500 3.500M900.500 636l3.500 3.500 3.500-3.500"/>
      </g>
    </svg>

    <svg class="cursor" width="10" height="16" viewBox="0 0 10 16"><path d="M0 0v13l3-3 2.500 5.500 2-1L5 9.500h4.500z" fill="#000" stroke="#fff" stroke-width=".4"/></svg>
  </section>
</main>

<footer class="taskbar">
  <div class="tk"><svg width="16" height="16" viewBox="0 0 16 16"><path d="M0 2.300l6.500-.9V7.600H0zM7.300 1.300L16 0v7.600H7.300zM0 8.400h6.500v6.200L0 13.700zM7.300 8.400H16V16l-8.700-1.300z" fill="#fff"/></svg></div>
  <div class="tk"><svg width="16" height="16" viewBox="0 0 16 16"><circle cx="8" cy="8" r="6.500" fill="none" stroke="#fff" stroke-width="2"/></svg></div>
  <div class="tk"><svg width="20" height="14" viewBox="0 0 20 14"><rect x="4.500" y=".5" width="11" height="13" fill="none" stroke="#fff"/><path d="M2.500 3H.5v8h2M17.500 3h2v8h-2" fill="none" stroke="#fff"/></svg></div>
  <div class="tk"><svg width="22" height="20" viewBox="0 0 22 20"><path d="M0 1h8l2 2h12v17H0z" fill="#f6d365"/><path d="M0 5h22v2H0z" fill="#fde9a7"/><path d="M7 11h8l2 3v6H5v-6z" fill="#3fa9e0"/><rect x="9" y="15" width="4" height="5" fill="#f6d365"/></svg></div>
  <div class="tk"><svg width="22" height="24" viewBox="0 0 22 24"><path d="M7 6V3a4 4 0 0 1 8 0v3" fill="none" stroke="#fff" stroke-width="1.300"/><path d="M0 6h22v18H0z" fill="#fff"/><path d="M6 10h4.600v4.600H6z" fill="#e8492f"/><path d="M11.400 10H16v4.600h-4.600z" fill="#7fba00"/><path d="M6 15.400h4.600V20H6z" fill="#00a4ef"/><path d="M11.400 15.400H16V20h-4.600z" fill="#ffb900"/></svg></div>
  <div class="tk"><svg width="22" height="24" viewBox="0 0 22 24"><path d="M1 13C1 5 6 0 12 0c6 0 10 5 10 12v2H8c0 5 6 7 13 4v5c-10 3-20 0-20-10zM8 9h8c0-5-7-5-8 0z" fill="#0f78d4"/></svg></div>
  <div class="tk"><svg width="24" height="24"><use href="#chrome"/></svg></div>
  <div class="tk"><svg width="24" height="24" viewBox="0 0 24 24"><circle cx="12" cy="13" r="11" fill="#e8602c"/><circle cx="12" cy="13" r="5.500" fill="#3b3f99"/><path d="M12 2c6 0 11 5 11 11 0 2-.5 4-1.500 5.500C22 12 19 8 17 7c1 3 0 5-2 6-1-3-3-3-5-3 0-3 1-6 2-8z" fill="#fbb034"/><path d="M4 20c5 4 13 4 18-3-2 7-14 9-18 3z" fill="#f7d53c"/></svg></div>
  <div class="tk"><span class="app ps">Ps</span></div>
  <div class="tk"><span class="app fs">Fs</span></div>
  <div class="tk on"><span class="app xd">Xd</span></div>
  <div class="tk"><svg width="24" height="24" viewBox="0 0 24 24"><path d="M17 0l7 3v18l-7 3L6 14l-4 3-2-1V8l2-1 4 3zM17 6l-6 6 6 6zM2 9.500v5l2.500-2.500z" fill="#7d56c2"/></svg></div>
  <div class="tk"><svg width="24" height="24" viewBox="0 0 24 24"><circle cx="12" cy="12" r="12" fill="#dd4814"/><circle cx="12" cy="12" r="5.800" fill="none" stroke="#fff" stroke-width="2"/><circle cx="5" cy="12" r="2.200" fill="#fff"/><circle cx="15.500" cy="5.900" r="2.200" fill="#fff"/><circle cx="15.500" cy="18.100" r="2.200" fill="#fff"/></svg></div>
  <div class="tk"><svg width="24" height="20" viewBox="0 0 24 20"><path d="M4 0h20l-4 20H0z" fill="#3a7bd5"/><path d="M6 4l6 5-8 6" fill="none" stroke="#fff" stroke-width="2"/><path d="M11 15h6" stroke="#fff" stroke-width="2"/></svg></div>
  <div class="tk"><svg width="24" height="24" viewBox="0 0 24 24"><path d="M12 0l4 7-4 5-4-5z" fill="#e8544a"/><path d="M16 7l8 5-7 7-5-7z" fill="#7cc04a"/><path d="M8 7l-8 5 7 7 5-7z" fill="#5a9be8"/><path d="M7 19l5-7 5 7-5 5z" fill="#f4d44a"/></svg></div>
  <div class="tk"><svg width="24" height="26" viewBox="0 0 24 26"><path d="M3 2l4 3h10l4-3v16c0 4-4 6-9 6s-9-2-9-6z" fill="#d83b20"/><circle cx="8" cy="10" r="3.800" fill="#fff"/><circle cx="16" cy="10" r="3.800" fill="#fff"/><circle cx="8" cy="10" r="1.800" fill="#222"/><circle cx="16" cy="10" r="1.800" fill="#222"/><path d="M10.500 13l1.500 2 1.500-2z" fill="#f5a623"/><path d="M7 16c2 1 8 1 10 0v5c-3 2-7 2-10 0z" fill="#f08a24"/></svg></div>
  <div class="tk"><svg width="24" height="22" viewBox="0 0 24 22"><path d="M0 3l13-3v22L0 19z" fill="#2b5797"/><path d="M13 3h11v16H13z" fill="#fff"/><path d="M14 6h9M14 9h9M14 12h9M14 15h9" stroke="#2b5797"/></svg></div>
  <div class="tk"><svg width="24" height="24" viewBox="0 0 24 24"><rect width="24" height="24" rx="2" fill="#4a4a4a"/><path d="M5 9l14-5v5L5 14zM5 15l14-5v5L5 20z" fill="#f59b12"/></svg></div>
  <div class="tk"><span class="app mx">3</span></div>
  <div class="tk"><svg width="24" height="24" viewBox="0 0 24 24"><path d="M12 1l10 5.500v11L12 23 2 17.500v-11z" fill="#fff"/><path d="M12 5l-6 7 6 7zM14 8l5 4-5 4z" fill="#222"/></svg></div>
  <div class="tk"><svg width="24" height="24" viewBox="0 0 24 24"><path d="M14 0l9 20-5-3-4 6-4-10-8 2z" fill="#e8702a"/><path d="M2 15l7-5 4 6-5 2z" fill="#3a8fd0"/><path d="M14 0l-2 12 2 11 4-6z" fill="#b8431a"/></svg></div>
  <div class="tk badged"><svg width="26" height="22" viewBox="0 0 26 22"><path d="M0 8L13 0l13 8v14H0z" fill="#fff"/><path d="M0 8l13 8 13-8" fill="none" stroke="#03243f" stroke-width="1.200"/></svg><span class="bdg">42</span></div>
  <div class="tk"><svg width="26" height="26" viewBox="0 0 26 26"><ellipse cx="13" cy="13" rx="12" ry="13" fill="#eee"/><circle cx="10" cy="9" r="4" fill="#c7d826"/><circle cx="15" cy="8" r="3.500" fill="#222"/><circle cx="10" cy="17" r="5" fill="#b8ca20"/></svg></div>
  <div class="tk"><svg width="26" height="26" viewBox="0 0 26 26"><rect y="0" width="9" height="9" rx="1" fill="#1a6fd0"/><rect x="7" y="11" width="13" height="13" rx="1" fill="#555"/><path d="M9.500 11V7a4 4 0 0 1 8 0v4" fill="none" stroke="#aaa" stroke-width="1.800"/><path d="M18 18h8v8h-8z" fill="#2fbf3f"/></svg></div>
  <div class="tk ul"><svg width="24" height="24"><use href="#chrome"/></svg></div>
  <div class="tray">
    <svg width="16" height="16" viewBox="0 0 16 16"><circle cx="10" cy="3.500" r="2.500" fill="none" stroke="#fff"/><path d="M1.500 15L5 6.500h4L5.500 15M7.500 8.500h5.500l1 3" fill="none" stroke="#fff"/></svg>
    <svg class="car" width="12" height="7" viewBox="0 0 12 7"><path d="M.5 6.500L6 1l5.500 5.500" fill="none" stroke="#fff"/></svg>
    <svg width="16" height="14" viewBox="0 0 16 14"><path d="M.5 4.500h3L7 1v12L3.500 9.500h-3zM10 4c1.500 2 1.500 4 0 6M12.500 2c2.500 3 2.500 7 0 10" fill="none" stroke="#fff"/></svg>
    <svg width="15" height="14" viewBox="0 0 15 14"><path d="M1.500 13A11 11 0 0 1 13 1.500M4.500 13A8 8 0 0 1 13 4.500M7.500 13A5 5 0 0 1 13 7.500" fill="none" stroke="#fff"/><circle cx="12" cy="12" r="1.300" fill="#fff"/></svg>
    <svg width="16" height="12" viewBox="0 0 16 12"><path d="M3.500 12a3.500 3.500 0 0 1-.5-7 5 5 0 0 1 9.500-.8A3.800 3.800 0 0 1 12.500 12z" fill="#fff"/><path d="M6.500 4v5M9.500 4v5" stroke="#03243f" stroke-width="1.200"/></svg>
    <div class="clock"><span>1:24 AM</span><span>3/15/2018</span></div>
    <div class="notif"><svg width="16" height="17" viewBox="0 0 16 17"><path d="M0 0h16v13H5l-3 4v-4H0z" fill="#fff"/><path d="M3 3.500h10M3 6.500h10M3 9.500h10" stroke="#03243f"/></svg><span class="bdg sm">2</span></div>
  </div>
</footer>
</body>
</html>
```

FILE: styles.css
```css
* { box-sizing: border-box; }
html, body { margin: 0; padding: 0; }
body {
  width: 1920px; height: 1080px; overflow: hidden;
  display: flex; flex-direction: column;
  font-family: "Open Sans", "Noto Sans", sans-serif;
  background: #e2e2e2; color: #444;
}
.defs { position: absolute; width: 0; height: 0; }

/* window chrome */
.titlebar { height: 32px; background: #e3e3e3; display: flex; justify-content: flex-end; flex: none; }
.win { width: 46px; display: flex; align-items: center; justify-content: center; }
.toolbar { height: 42px; flex: none; background: #f5f5f5; border-bottom: 2px solid #e6e6e6; display: flex; align-items: stretch; font-size: 12.5px; }
.tleft { width: 907px; display: flex; align-items: stretch; padding-left: 17px; }
.burger { align-self: center; margin-right: 39px; }
.tab { display: flex; align-items: center; margin-right: 32px; color: #8a8a8a; font-size: 12.5px; }
.act-tab { color: #555; box-shadow: inset 0 -2px 0 #444; }
.doc { align-self: center; font-size: 11.5px; color: #444; }
.tright { margin-left: auto; display: flex; align-items: center; padding-right: 18px; }
.zoom { width: 70px; height: 24px; margin-top: 4px; display: flex; justify-content: space-between; align-items: center; border-bottom: 1px solid #ddd; color: #555; font-size: 12px; }
.ti { flex: none; }
.dev { margin-left: 62px; }
.play { margin-left: 35.5px; }
.share { margin-left: 31.5px; }

.main { flex: 1; min-height: 0; display: flex; }
.rail { width: 50px; flex: none; background: #f5f5f5; border-right: 2px solid #e0e0e0; display: flex; flex-direction: column; justify-content: space-between; align-items: center; padding: 16px 0 17.5px; }
.railgrp { display: flex; flex-direction: column; align-items: center; gap: 25.5px; }
.panel { width: 242px; flex: none; background: #f5f5f5; }
.phead { height: 48px; padding: 4px 0 0 15px; display: flex; align-items: center; gap: 9px; font-size: 10px; letter-spacing: 1.15px; color: #888; }
.row { height: 32px; display: flex; align-items: center; padding-left: 12px; font-size: 12px; letter-spacing: -.2px; color: #444; white-space: nowrap; }
.row.l1 { padding-left: 32px; }
.row.l2 { padding-left: 52px; }
.ic { width: 13px; height: 11px; margin-right: 8px; flex: none; }
.tg { width: 13px; margin-right: 8px; font: bold 13px "Liberation Serif", serif; color: #c9c9c9; text-align: center; flex: none; }
.rg { width: 10px; height: 10px; margin: 0 9px 0 2px; background: #c4c4c4; flex: none; }

/* free canvas */
.canvas { flex: 1; position: relative; overflow: hidden; background: #e2e2e2; }
.wires { position: absolute; left: 0; top: 0; }
.wire path { stroke: #1a90e8; stroke-width: 2; }
.wirefill { fill: #1a90e8; }
.fade path { stroke: #60b2ee; stroke-width: 2; }
.fadefill { fill: #4aa6ea; fill-opacity: .75; }
.pl { fill: #7dbcec; }
.pd { fill: #1a90e8; }
.cv { fill: none; stroke: #fff; stroke-width: 1.6; }
.cursor { position: absolute; left: 111px; top: 120px; }

.c0 { left: -43px; } .c1 { left: 219.5px; } .c2 { left: 492.5px; } .c3 { left: 749.5px; }
.c4 { left: 1005.5px; } .c5 { left: 1262.5px; } .c6 { left: 1520px; }
.r0 { top: 6px; } .r1 { top: 195px; } .r2 { top: 385px; } .r3 { top: 568.5px; } .r4 { top: 756px; } .r4b { top: 758px; }

/* artboards */
.ab { position: absolute; width: 240px; height: 168px; background: #fff; border: 1px solid #d3d3d3; }
.lb { position: absolute; left: 2px; bottom: calc(100% + 6px); font-size: 10.6px; line-height: 15px; white-space: nowrap; color: #707070; }
.r3 > .lb { bottom: calc(100% + 8px); }
.lb.dark { color: #333; }
.selected::after { content: ""; position: absolute; inset: -1px; background: rgba(26, 144, 232, .3); border: 2px solid #1a90e8; }
.ts { height: 13px; font: 9px/13px "Liberation Serif", serif; color: #5a3cff; text-align: center; }
.sc { width: 204.6px; height: 142px; margin-left: 17px; display: flex; flex-direction: column; }
.st { height: 5px; flex: none; background: #808080; position: relative; }
.st::after { content: ""; position: absolute; right: 2px; top: 1.5px; width: 12px; height: 1.5px; background: #dcdcdc; }
.bd { flex: 1; min-height: 0; background: #88ffe6; display: flex; flex-direction: column; }
.nb { height: 11px; flex: none; background: #000; border-top: 1px solid #50c8b4; display: flex; align-items: center; justify-content: center; }
.hm { width: 3.5px; height: 3.5px; border: .7px solid #ddd; border-radius: 50%; }
.bk { width: 0; height: 0; margin: 0 29px 0 -32px; border: 2px solid transparent; border-right: 3px solid #ddd; border-left: 0; }
.nv { display: flex; gap: 5.1px; padding: 2px 0 0 3.4px; flex: none; }
.nv b { width: 45.5px; height: 13px; background: #009688; color: #fff; font: bold 3.7px/13px "Liberation Sans", sans-serif; text-align: center; }
.nv b.on { box-shadow: 0 1px 2px rgba(0, 0, 0, .45); }

/* card with torn edge */
.card { position: relative; width: 139px; height: 78px; margin: 9px auto 0; background: #fff; font: 3.5px/5px "Liberation Sans", sans-serif; color: #777; }
.card.w { width: 186px; margin-left: 11px; }
.card.pt4 { padding-top: 4px; }
.card.pt15 { padding-top: 15px; }
.card::after {
  content: ""; position: absolute; left: 0; right: 0; top: 100%; height: 4px;
  background:
    linear-gradient(45deg, #fff 50%, transparent 50%) 0 0 / 6px 4px repeat-x,
    linear-gradient(-45deg, #fff 50%, transparent 50%) 3px 0 / 6px 4px repeat-x;
  transform: scaleY(-1);
}
.ct { font: bold 5.2px/5px "Liberation Serif", serif; color: #000; text-align: center; padding-top: 3.5px; position: relative; white-space: nowrap; }
.card.w > .ct:not(.t17) { font-size: 4.7px; }
.t8 { height: 18px; } .t10 { height: 10px; } .t12 { height: 12px; } .t15 { height: 15px; } .t17 { height: 17.7px; } .t25 { height: 27px; } .t33 { height: 34px; }
.li { height: 12px; margin: 0 1px; padding: 0 3px; border: 1px solid #d4d4d4; border-width: 0 1px 1px; font: 3.5px/11px "Liberation Serif", serif; color: #777; position: relative; }
.card > .li:first-of-type { border-top-width: 1px; }
.li.sel { border: 1px solid #777; line-height: 10px; }
.li.strong { color: #222; font-weight: bold; }
.li.sg { color: #666; }
.wf { position: absolute; right: 12px; top: 3.5px; width: 0; height: 0; border: 2.2px solid transparent; border-top: 3.6px solid #444; border-bottom: 0; }
.swn { position: absolute; left: 0; top: 7px; font-size: 3.8px; }
.wifi-t { height: 15.3px; }
.act { display: flex; justify-content: flex-end; gap: 5px; padding-right: 10.6px; position: relative; z-index: 1; }
.act.pr5 { padding-right: 5.3px; }
.m1 { margin-top: 1px; } .m2 { margin-top: 2px; } .m7 { margin-top: 7.3px; } .m11 { margin-top: 11px; } .m19 { margin-top: 19px; }
.b { display: block; width: 22.5px; height: 9px; background: #009688; color: #fff; font: bold 3.4px/9px "Liberation Sans", sans-serif; text-align: center; box-shadow: 0 .5px 1px rgba(0, 0, 0, .3); }

/* home */
.home { display: flex; margin-top: 16.7px; color: #1400e6; }
.hl { width: 59px; height: 66px; margin-left: 10px; border-right: 1px solid #5edcc6; font: bold 4px/6px "Liberation Serif", serif; }
.hd { height: 25px; padding: 11px 0 0 3px; border-bottom: 1px solid #5edcc6; color: #3f74f0; font: 4.5px/6px "Open Sans", sans-serif; white-space: nowrap; }
.ho { height: 25px; padding: 4px 0 0 3px; border-bottom: 1px solid #5edcc6; }
.hx { padding: 6px 0 0 3px; }
.hc { width: 60px; margin-left: 19.5px; }
.it { font: 7.2px/8px "Open Sans", sans-serif; color: #2f66e8; white-space: nowrap; }
.tm { height: 28px; margin-top: 9px; font: 300 29px/28px "Open Sans", sans-serif; letter-spacing: -1.5px; white-space: nowrap; color: #0a00e8; }
.dg { font-size: 22px; vertical-align: 10px; letter-spacing: 0; }
.hh { margin-top: 5px; font: bold 4px/6px "Liberation Serif", serif; white-space: nowrap; }
.hr { width: 34px; margin: 8.3px 0 0 9px; display: flex; flex-direction: column; align-items: center; }
.cb { width: 14px; height: 14px; border-radius: 50%; background: #00897b; color: #fff; font: 6px/14px "Liberation Sans", sans-serif; text-align: center; box-shadow: 0 .5px 1px rgba(0, 0, 0, .3); flex: none; }
.sl { margin-top: 3.5px; font: 7.2px/9px "Open Sans", sans-serif; color: #2f66e8; white-space: nowrap; }
.sv { margin: 1.5px 0 1px; font: 7.2px/9px "Open Sans", sans-serif; color: #2f66e8; }

/* schedule periods */
.periods { display: flex; gap: 7.7px; padding-left: 8px; }
.per { width: 36px; height: 37px; padding-top: 2.5px; border: 1px solid #c8c8c8; font: 3.5px/6px "Liberation Sans", sans-serif; text-align: center; color: #666; }

/* wake */
.wake { display: flex; align-items: flex-start; height: 52px; }
.tw { width: 38px; height: 56.7px; background: #fafafa; box-shadow: 0 1px 3px rgba(0, 0, 0, .3); display: block; flex: none; }
.tw.ws { width: 46px; margin: -2px 3.6px 0 2px; }
.twh { height: 10px; background: #009688; color: #fff; font: 5px/10px "Open Sans", sans-serif; text-align: center; }
.twh small { font-size: 2.5px; }
.face { display: block; width: 38px; height: 38px; margin: 4px auto 0; }
.tc { width: 60px; flex: none; display: flex; flex-direction: column; align-items: center; }
.tc.n { width: 42.7px; }
.tl { height: 7px; font: 3.8px/7px "Open Sans", sans-serif; color: #777; white-space: nowrap; }
.cb + .tl { margin-top: 5.8px; }
.cb.mm { margin-top: 3.5px; }
.fan { width: 44px; margin-left: 3px; padding-top: 7px; text-align: center; font: 3.8px/7px "Open Sans", sans-serif; color: #777; }
.fm { height: 8px; }
.fo { text-align: left; padding-left: 4px; font-size: 3px; height: 8px; }
.fb { width: 36px; height: 12.7px; margin-left: 5px; padding-left: 3px; border: .8px solid #888; text-align: left; font: 3.2px/11px "Liberation Sans", sans-serif; color: #444; }

/* days */
.days { display: grid; grid-template-columns: 95px 90px; grid-auto-rows: 14px; padding: 0 0 0 4px; }
.dy { display: flex; align-items: center; font: 3.2px/5px "Liberation Serif", serif; color: #777; }
.dy span { flex: 1; padding-left: 4px; }
.rd { width: 9px; height: 9px; border-radius: 50%; background: #bdbdbd; flex: none; }
.ck { width: 4px; height: 4px; border: .6px solid #888; margin-right: 17px; flex: none; }
.days .dy:nth-child(2n) .ck { margin-right: 6px; }
.ck.yes { background: #009688; border-color: #009688; }
.dy.nx { padding-left: 55px; }
.dy.nx span { flex: none; padding: 0; }

/* date / time */
.dt { display: flex; gap: 14.3px; padding-left: 17.3px; }
.dw { width: 47.7px; height: 56.7px; background: #fafafa; box-shadow: 0 1px 3px rgba(0, 0, 0, .3); flex: none; }
.dwh { height: 13px; padding: 6px 0 0 3px; background: #009688; color: #fff; font: bold 3.2px/5px "Liberation Sans", sans-serif; }
.calg { display: block; width: 48px; height: 44px; }

/* text blocks */
.temps { display: flex; gap: 3.3px; padding-left: 7px; height: 52px; }
.para { padding-left: 15px; font: 3.7px/6px "Liberation Serif", serif; color: #666; white-space: nowrap; height: 31px; }
.lk { color: #3a3af0; text-decoration: underline; }
.rev { height: 39px; margin-top: -1px; font: 4.2px/6.8px "Open Sans", sans-serif; letter-spacing: -.15px; color: #777; text-align: center; white-space: nowrap; }
.ok { font: 3.2px/5px "Open Sans", sans-serif; color: #777; text-align: center; white-space: nowrap; }
.pw { text-align: center; color: #777; font: 3.4px/5px "Open Sans", sans-serif; margin-top: .5px; }
.pi { width: 72.4px; height: 7.7px; margin: 3.5px 0 0 31px; padding-left: 1px; border: .7px solid #ccc; font: 3.4px/6.5px "Open Sans", sans-serif; color: #888; }
.kb { position: relative; z-index: 1; width: 90.6px; height: 68.3px; margin: 4.300px 0 0 21.7px; background: #eceff1; display: flex; flex-direction: column; font: 4.2px/13px "Liberation Sans", sans-serif; color: #666; }
.kr { height: 13.6px; display: flex; justify-content: space-around; align-items: center; padding: 0 3px; }
.kr.pad { padding: 0 8px; }
.sg-r { font-size: 3.300px; }
.sp { width: 37px; height: 6px; background: #cfd8dc; }
.go { width: 9px; height: 9px; border-radius: 50%; background: #009688; color: #fff; font-size: 2.4px; line-height: 9px; text-align: center; }
.bs { width: 5px; height: 4px; background: #666; }

/* taskbar */
.taskbar { height: 40px; flex: none; background: #03243f; display: flex; align-items: stretch; }
.tk { width: 49px; display: flex; align-items: center; justify-content: center; flex: none; position: relative; }
.tk:first-child { width: 48.5px; }
.tk.on { background: #0a4a80; box-shadow: inset 0 -3px 0 #76b9ed; }
.tk.ul { box-shadow: inset 0 -3px 0 #76b9ed; }
.app { display: block; width: 23px; height: 23px; font: bold 11px/21px "Liberation Sans", sans-serif; text-align: center; border: 1.5px solid; }
.ps { background: #001d34; color: #55b4f5; border-color: #55b4f5; }
.fs { background: #2c1500; color: #ff9a00; border-color: #c77800; }
.xd { background: #2e001f; color: #ff8ad0; border-color: #e0369c; }
.mx { background: #9cdccd; color: #0a7d75; border-color: #9cdccd; font-size: 16px; }
.bdg { position: absolute; right: 2.5px; bottom: 2px; width: 21px; height: 21px; border-radius: 50%; background: #1c6aa5; border: 1px solid #03243f; color: #fff; font: 12px/19px "Open Sans", sans-serif; text-align: center; }
.tray { margin-left: auto; display: flex; align-items: center; color: #fff; }
.tray svg { flex: none; margin-right: 9px; }
.tray .car { margin-left: 12px; margin-right: 10px; }
.clock { width: 52px; margin-left: 1px; display: flex; flex-direction: column; align-items: center; font-size: 11.5px; line-height: 18px; color: #fff; white-space: nowrap; }
.notif { width: 60px; height: 40px; display: flex; align-items: center; justify-content: center; position: relative; padding-right: 4px; }
.notif svg { margin: 0 0 4px; }
.bdg.sm { right: 17.5px; bottom: 4px; width: 17px; height: 17px; font-size: 11px; line-height: 15px; }
```
